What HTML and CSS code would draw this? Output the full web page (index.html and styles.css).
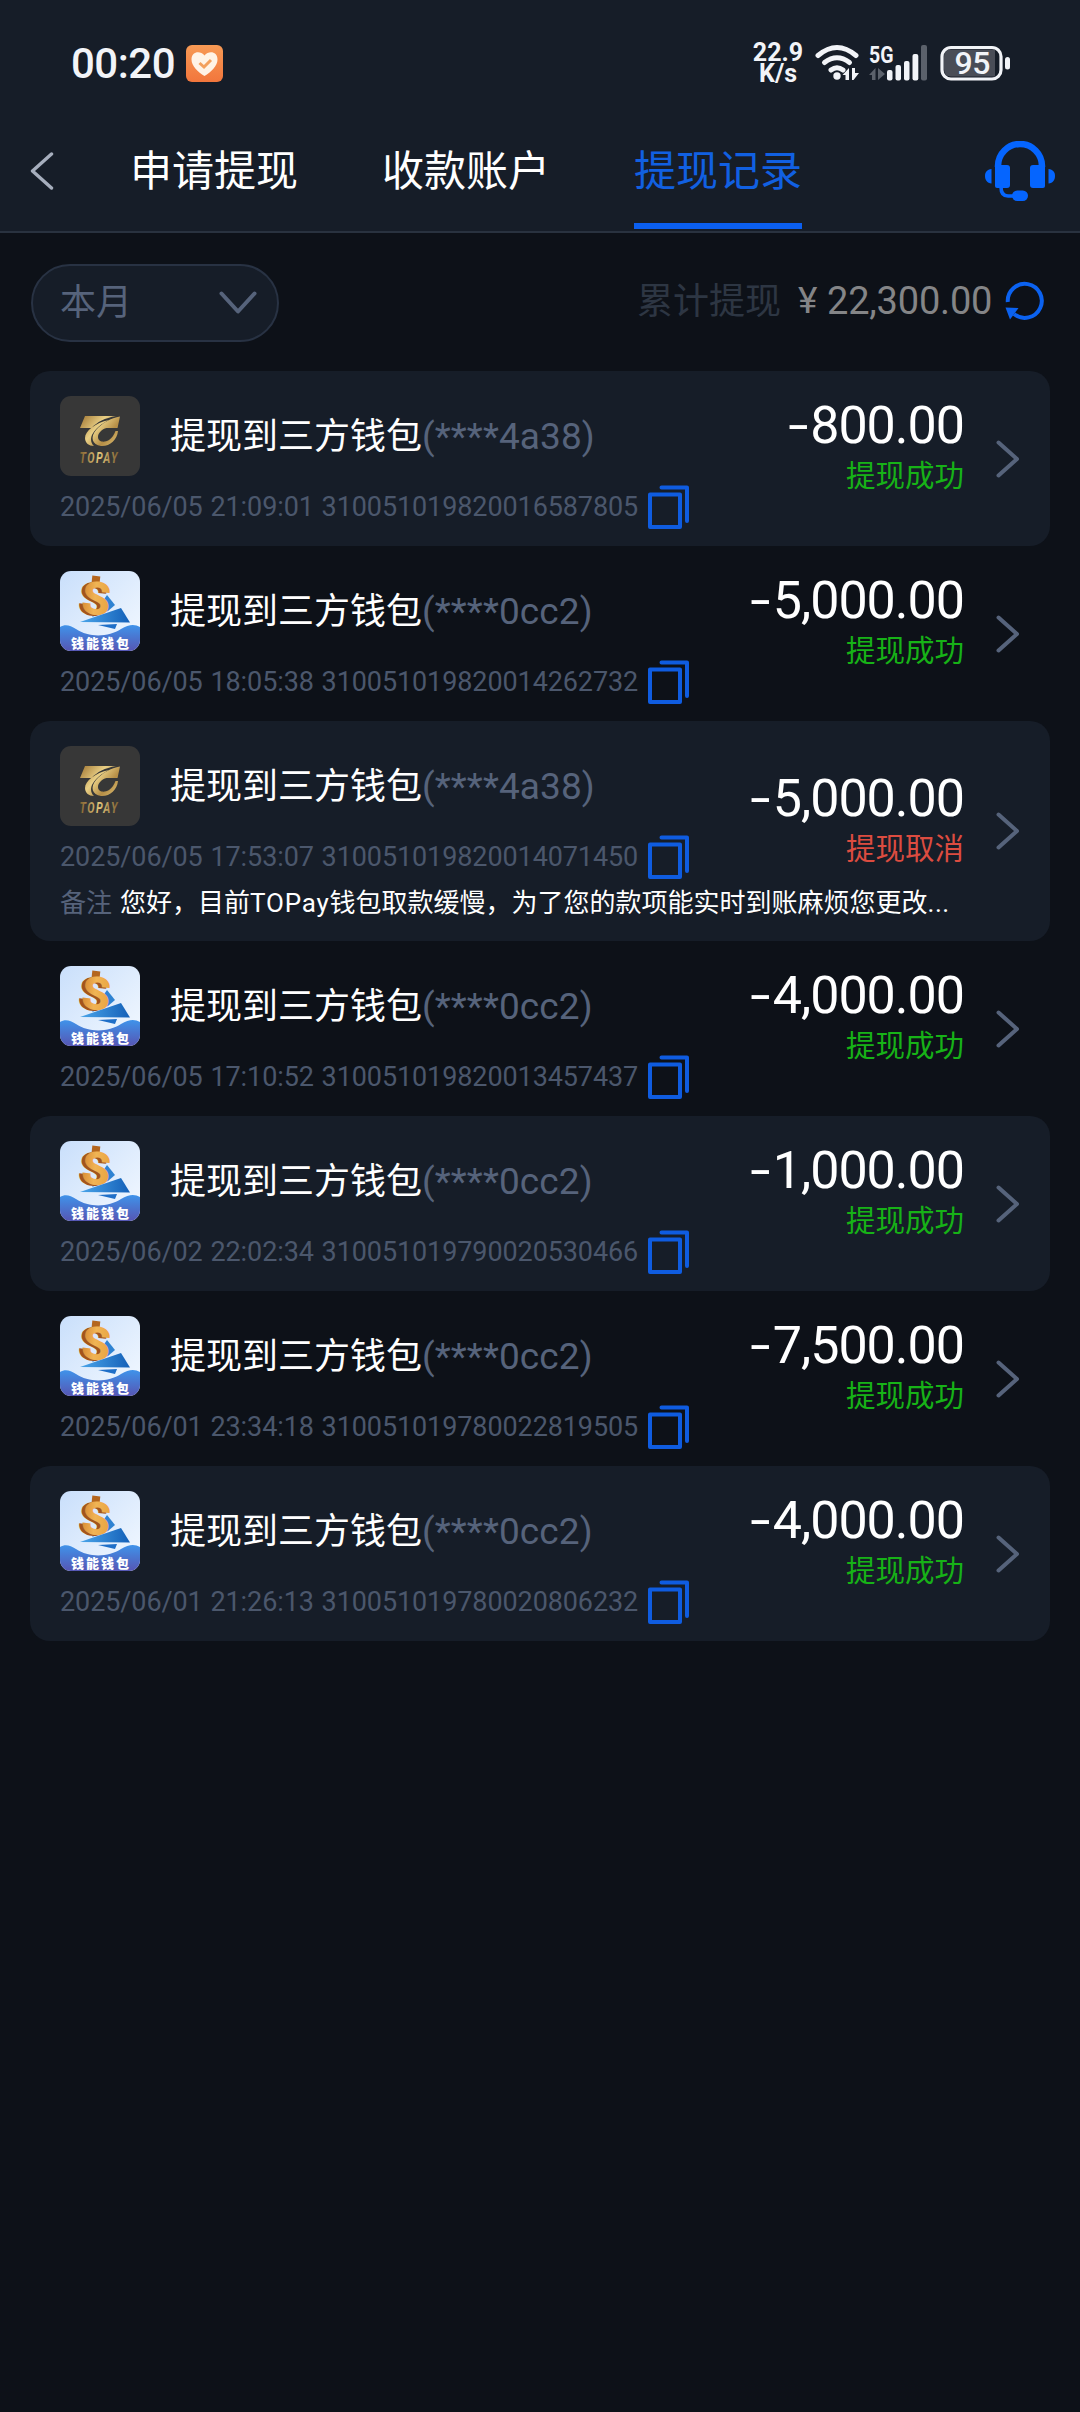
FILE: index.html
```html
<!DOCTYPE html>
<html lang="zh-CN">
<head>
<meta charset="utf-8">
<title>提现记录</title>
<link rel="stylesheet" href="styles.css">
</head>
<body>
<svg class="defs" aria-hidden="true">
  <defs>
    <linearGradient id="gold" gradientUnits="userSpaceOnUse" x1="22" y1="20" x2="58" y2="50">
      <stop offset="0" stop-color="#a57c38"/><stop offset=".4" stop-color="#e9cf85"/><stop offset=".7" stop-color="#b58d45"/><stop offset="1" stop-color="#e0c277"/>
    </linearGradient>
    <linearGradient id="goldText" x1="0" y1="0" x2="1" y2="0">
      <stop offset="0" stop-color="#80602f"/><stop offset=".5" stop-color="#e3c77c"/><stop offset="1" stop-color="#80602f"/>
    </linearGradient>
    <linearGradient id="coin" x1="0" y1="0" x2="1" y2="0">
      <stop offset="0" stop-color="#d98a32"/><stop offset=".45" stop-color="#f0b455"/><stop offset="1" stop-color="#e9a440"/>
    </linearGradient>
    <linearGradient id="sky" x1="0" y1="0" x2="1" y2="1">
      <stop offset="0" stop-color="#c9dffb"/><stop offset="1" stop-color="#f4f9ff"/>
    </linearGradient>
    <linearGradient id="wave" x1="0" y1="0" x2="0" y2="1">
      <stop offset="0" stop-color="#3f93ea"/><stop offset="1" stop-color="#5656b4"/>
    </linearGradient>
    <linearGradient id="sail" x1="0" y1="0" x2="1" y2="0">
      <stop offset="0" stop-color="#4aa5ea"/><stop offset="1" stop-color="#1460b8"/>
    </linearGradient>
    <linearGradient id="orange" x1="0" y1="0" x2="0" y2="1">
      <stop offset="0" stop-color="#f79a55"/><stop offset="1" stop-color="#f2763c"/>
    </linearGradient>
    <clipPath id="round"><rect width="80" height="80" rx="11"/></clipPath>
    <symbol id="topay" viewBox="0 0 80 80">
      <rect width="80" height="80" rx="11" fill="#373737"/>
      <path d="M25 20H56C45 22 37 26 31.500 32H20Z" fill="url(#gold)"/>
      <path d="M49 24C35 27 25 35 25 42C25 47 29 50 34 50C27 43 33 32 49 24Z" fill="url(#gold)"/>
      <path d="M60 20.500L57.500 32H46.500C42 33 38 37 38 41C38 46 44 47 49 44C52 42 54 39 55.500 35H58C57 44 50 50.500 41 50C32 49 30 41 36 34C42 27 51 22 60 20.500Z" fill="url(#gold)"/>
      <text class="topay-text" transform="translate(19.500 67) scale(.72 1)" fill="url(#goldText)">TOPAY</text>
    </symbol>
    <symbol id="qianneng" viewBox="0 0 80 80">
      <g clip-path="url(#round)">
        <rect width="80" height="80" fill="url(#sky)"/>
        <path d="M0 56C5 53 10 54 16 58C29 67 49 66 61 58C69 53 75 53 80 56V80H0Z" fill="url(#wave)"/>
        <path d="M47 24L55 34L48 40L32 46Z" fill="#2f83d2"/>
        <g transform="rotate(6 35 27)">
          <rect x="30" y="5" width="8" height="8" fill="#b4661f"/>
          <text class="dollar dollar-edge" x="18.500" y="44.500">S</text>
          <text class="dollar" x="22" y="43.500">S</text>
        </g>
        <path d="M61 37L20 51L70 51.500Z" fill="url(#sail)"/>
        <path d="M38 54L57 53L55 58Z" fill="#1f6fc8"/>
        <text class="qn-text" x="11" y="76.500" textLength="58">钱能钱包</text>
      </g>
    </symbol>
    <symbol id="copy" viewBox="0 0 42 44">
      <path d="M13.500 2.500H39V36" fill="none" stroke="#0f5ce0" stroke-width="4" stroke-linecap="round" stroke-linejoin="round"/>
      <rect x="2" y="9.500" width="30" height="32.500" fill="none" stroke="#0f5ce0" stroke-width="4" stroke-linejoin="round"/>
    </symbol>
    <symbol id="next" viewBox="0 0 24 38">
      <path d="M2.500 2.500L21 19L2.500 35.500" fill="none" stroke="#56637b" stroke-width="4" stroke-linecap="round" stroke-linejoin="round"/>
    </symbol>
  </defs>
</svg>

<header class="header">
  <div class="status">
    <span class="time">00:20</span>
    <svg class="app" width="37" height="37" viewBox="0 0 37 37">
      <rect width="37" height="37" rx="6" fill="url(#orange)"/>
      <path d="M18.500 31C12 27 5.500 21 5.500 14.500C5.500 6.500 14 5 18.500 10.500C23 5 31.500 6.500 31.500 14.500C31.500 21 25 27 18.500 31Z" fill="#fff3e6"/>
      <path d="M13.500 18L18 22L25 15" fill="none" stroke="#f3a05d" stroke-width="3"/>
    </svg>
    <span class="speed"><span>22.9</span><span>K/s</span></span>
    <svg class="signals" width="200" height="42" viewBox="812 41 200 42">
      <g fill="none" stroke="#f2f4f8" stroke-width="5" stroke-linecap="round">
        <path d="M818 55.500Q837 39.500 856 55.500"/>
        <path d="M824.500 62.500Q837 53 849.500 62.500"/>
        <path d="M831 70Q837 65.500 843 70"/>
      </g>
      <circle cx="837" cy="76" r="3.700" fill="#f2f4f8"/>
      <path d="M842.500 75L849 68V80H845.500V75ZM852 68H855V73H859L853.500 80H852Z" fill="#f2f4f8"/>
      <text class="net" x="869" y="62.500" textLength="24.500" lengthAdjust="spacingAndGlyphs">5G</text>
      <path d="M869 75L875.500 68V80H872V75ZM878 68L885 74L878 80Z" fill="#5b616b"/>
      <g fill="#f2f4f8">
        <rect x="887" y="70" width="5.500" height="10.500" rx="2"/>
        <rect x="895.500" y="65" width="5.500" height="15.500" rx="2"/>
        <rect x="904" y="61" width="5.500" height="19.500" rx="2"/>
        <rect x="912.500" y="54" width="5.800" height="26.500" rx="2"/>
      </g>
      <rect x="921" y="45" width="6" height="35.500" rx="2" fill="#5b616b"/>
      <path d="M951 49.500H995V76.500H951Q944 76.500 944 69V57Q944 49.500 951 49.500Z" fill="#494d57"/>
      <rect x="942" y="47.500" width="59" height="31.500" rx="9" fill="none" stroke="#f2f4f8" stroke-width="3.200"/>
      <rect x="1005" y="57" width="5" height="12.500" rx="2.500" fill="#f2f4f8"/>
      <text class="level" x="954.500" y="74" textLength="36">95</text>
    </svg>
  </div>
  <nav class="nav">
    <svg class="back" width="24" height="38" viewBox="0 0 24 38"><path d="M21.500 2L2.500 19L21.500 36" fill="none" stroke="#a6aebd" stroke-width="3.400" stroke-linecap="round" stroke-linejoin="round"/></svg>
    <div class="tabs">
      <a class="tab">申请提现</a>
      <a class="tab">收款账户</a>
      <a class="tab active">提现记录</a>
    </div>
    <svg class="service" width="70" height="60" viewBox="0 0 70 60" fill="#0565ff">
      <path d="M13 26V25A22 22 0 0 1 57 25V26" fill="none" stroke="#0565ff" stroke-width="6.500"/>
      <path d="M10 24H22Q25 24 25 27V44Q25 47 22 47H12Q10 47 10 45Z"/>
      <path d="M60 24H48Q45 24 45 27V44Q45 47 48 47H58Q60 47 60 45Z"/>
      <path d="M6.500 28V42.500C2 42 0 39 0 35S2 28.500 6.500 28Z"/>
      <path d="M63.500 28V42.500C68 42 70 39 70 35S68 28.500 63.500 28Z"/>
      <path d="M16 46C16 52 18 55 23 55H30" fill="none" stroke="#0565ff" stroke-width="3.600"/>
      <rect x="27" y="49.500" width="16" height="10.500" rx="5.200"/>
    </svg>
  </nav>
</header>

<main>
  <section class="summary">
    <button class="filter">
      <span>本月</span>
      <svg width="38" height="24" viewBox="0 0 38 24"><path d="M2.500 2.500L19 20.500L35.500 2.500" fill="none" stroke="#56637b" stroke-width="4" stroke-linecap="round" stroke-linejoin="round"/></svg>
    </button>
    <div class="total">
      <span class="total-label">累计提现</span>
      <span class="yen">¥</span>
      <span class="total-value">22,300.00</span>
      <svg width="40" height="40" viewBox="0 0 40 40"><path d="M2.800 21A17 17 0 1 1 9 33" fill="none" stroke="#0b62f0" stroke-width="4"/><path d="M.5 26.500L13.500 27L5 38.500Z" fill="#0b62f0"/></svg>
    </div>
  </section>

  <ul class="list">
    <li class="card">
      <svg class="logo"><use href="#topay"/></svg>
      <div class="title">提现到三方钱包<span class="acct">(****4a38)</span></div>
      <div class="meta"><span class="order">2025/06/05 21:09:01 310051019820016587805</span><svg class="copy"><use href="#copy"/></svg></div>
      <div class="result"><span class="amount"><i>-</i>800.00</span><span class="state">提现成功</span></div>
      <svg class="next"><use href="#next"/></svg>
    </li>
    <li class="card">
      <svg class="logo"><use href="#qianneng"/></svg>
      <div class="title">提现到三方钱包<span class="acct">(****0cc2)</span></div>
      <div class="meta"><span class="order">2025/06/05 18:05:38 310051019820014262732</span><svg class="copy"><use href="#copy"/></svg></div>
      <div class="result"><span class="amount"><i>-</i>5,000.00</span><span class="state">提现成功</span></div>
      <svg class="next"><use href="#next"/></svg>
    </li>
    <li class="card noted">
      <svg class="logo"><use href="#topay"/></svg>
      <div class="title">提现到三方钱包<span class="acct">(****4a38)</span></div>
      <div class="meta"><span class="order">2025/06/05 17:53:07 310051019820014071450</span><svg class="copy"><use href="#copy"/></svg></div>
      <div class="note"><span class="note-label">备注</span><span class="note-text">您好，目前<span class="latin">TOPay</span>钱包取款缓慢，为了您的款项能实时到账麻烦您更改<span class="dots">...</span></span></div>
      <div class="result"><span class="amount"><i>-</i>5,000.00</span><span class="state cancelled">提现取消</span></div>
      <svg class="next"><use href="#next"/></svg>
    </li>
    <li class="card">
      <svg class="logo"><use href="#qianneng"/></svg>
      <div class="title">提现到三方钱包<span class="acct">(****0cc2)</span></div>
      <div class="meta"><span class="order">2025/06/05 17:10:52 310051019820013457437</span><svg class="copy"><use href="#copy"/></svg></div>
      <div class="result"><span class="amount"><i>-</i>4,000.00</span><span class="state">提现成功</span></div>
      <svg class="next"><use href="#next"/></svg>
    </li>
    <li class="card">
      <svg class="logo"><use href="#qianneng"/></svg>
      <div class="title">提现到三方钱包<span class="acct">(****0cc2)</span></div>
      <div class="meta"><span class="order">2025/06/02 22:02:34 310051019790020530466</span><svg class="copy"><use href="#copy"/></svg></div>
      <div class="result"><span class="amount"><i>-</i>1,000.00</span><span class="state">提现成功</span></div>
      <svg class="next"><use href="#next"/></svg>
    </li>
    <li class="card">
      <svg class="logo"><use href="#qianneng"/></svg>
      <div class="title">提现到三方钱包<span class="acct">(****0cc2)</span></div>
      <div class="meta"><span class="order">2025/06/01 23:34:18 310051019780022819505</span><svg class="copy"><use href="#copy"/></svg></div>
      <div class="result"><span class="amount"><i>-</i>7,500.00</span><span class="state">提现成功</span></div>
      <svg class="next"><use href="#next"/></svg>
    </li>
    <li class="card">
      <svg class="logo"><use href="#qianneng"/></svg>
      <div class="title">提现到三方钱包<span class="acct">(****0cc2)</span></div>
      <div class="meta"><span class="order">2025/06/01 21:26:13 310051019780020806232</span><svg class="copy"><use href="#copy"/></svg></div>
      <div class="result"><span class="amount"><i>-</i>4,000.00</span><span class="state">提现成功</span></div>
      <svg class="next"><use href="#next"/></svg>
    </li>
  </ul>
</main>
</body>
</html>
```
FILE: styles.css
```css
* { box-sizing: border-box; }
body {
  margin: 0;
  width: 1080px;
  min-height: 2412px;
  background: #0d1118;
  color: #fff;
  font-family: Roboto, "Noto Sans CJK SC", sans-serif;
}
svg { display: block; flex: none; }
.defs { position: absolute; width: 0; height: 0; }

.header {
  height: 233px;
  background: #161d28;
  border-bottom: 2px solid #29323f;
}
.status {
  height: 109px;
  display: flex;
  align-items: flex-start;
  padding: 41px 68px 0 71px;
  color: #f2f4f8;
}
.time {
  width: 115px;
  font-size: 42px;
  line-height: 46px;
  font-weight: 500;
  letter-spacing: -0.5px;
  white-space: nowrap;
}
.app { margin-top: 4px; }
.speed {
  display: flex;
  flex-direction: column;
  align-items: center;
  width: 60px;
  margin: 1px 4px 0 525px;
  font-size: 25px;
  line-height: 21px;
  font-weight: 700;
}
.net { font-size: 23px; font-weight: 700; fill: #f2f4f8; }
.level { font-size: 32px; font-weight: 500; fill: #f2f4f8; }

.nav {
  height: 122px;
  display: flex;
  align-items: center;
  padding: 0 25px 0 30px;
}
.tabs { display: flex; gap: 84px; height: 122px; margin: 0 auto 0 76px; }
.tab {
  display: flex;
  align-items: flex-start;
  height: 120px;
  padding-top: 32px;
  font-size: 42px;
  line-height: 62px;
  border-bottom: 6px solid transparent;
}
.tab.active { color: #1160e2; border-color: #0b5ff0; }
.back, .service { margin-top: 2px; }

.summary {
  height: 138px;
  display: flex;
  align-items: center;
  justify-content: space-between;
  padding: 1px 35px 0 31px;
}
.filter {
  width: 248px;
  height: 78px;
  display: flex;
  align-items: center;
  justify-content: space-between;
  padding: 0 20px 0 27px;
  border: 2px solid #283243;
  border-radius: 39px;
  background: #161d28;
  color: #56637b;
  font: 36px/50px Roboto, "Noto Sans CJK SC", sans-serif;
}
.total {
  display: flex;
  align-items: center;
  height: 50px;
  margin-top: -4px;
  font-size: 38px;
  line-height: 50px;
  color: #848587;
}
.total-label { margin: 3px 17px 0 0; font-size: 36px; color: #2d3643; }
.yen { width: 29px; font-size: 37px; }
.total-value { width: 178px; letter-spacing: -0.2px; }

.list { margin: 0; padding: 0 30px; list-style: none; }
.card {
  display: grid;
  grid-template-columns: 110px 1fr auto 22px;
  grid-template-rows: 80px 62px;
  column-gap: 0;
  height: 175px;
  padding: 25px 32px 8px 30px;
  border-radius: 20px;
}
.card:nth-child(odd) { background: #161d28; }
.card.noted { height: 220px; grid-template-rows: 80px 62px 45px; }
.logo { width: 80px; height: 80px; }
.title {
  grid-column: 2;
  padding-top: 1px;
  font-size: 36px;
  line-height: 80px;
  white-space: nowrap;
}
.acct { color: #56637b; font-size: 37px; letter-spacing: 0.1px; }
.meta {
  grid-column: 1 / 3;
  grid-row: 2;
  display: flex;
  align-items: center;
  color: #4b576c;
}
.order { width: 588px; font-size: 27px; letter-spacing: -0.1px; word-spacing: 1.2px; white-space: nowrap; }
.copy { width: 42px; height: 44px; }
.note {
  grid-column: 1 / 4;
  grid-row: 3;
  display: flex;
  gap: 8px;
  font-size: 26px;
  line-height: 30px;
  white-space: nowrap;
}
.note-label { color: #56637b; }
.latin { letter-spacing: 0.8px; }
.dots { letter-spacing: 0.5px; }
.result {
  grid-column: 3;
  grid-row: 1 / -1;
  align-self: center;
  display: flex;
  flex-direction: column;
  align-items: flex-end;
  margin: -38px 32px 0 0;
}
.amount { font-size: 52px; line-height: 56px; letter-spacing: -1px; }
.amount i { display: inline-block; font-style: normal; transform: scaleX(1.4); margin-right: 6px; }
.state { font-size: 29.5px; line-height: 44px; color: #17b217; }
.state.cancelled { color: #dc4c40; }
.next { grid-column: 4; grid-row: 1 / -1; align-self: center; width: 24px; height: 38px; margin-top: -17px; }
.topay-text { font: italic 700 15px Roboto, sans-serif; letter-spacing: 2px; }
.dollar { font: 900 46px Roboto, sans-serif; fill: url(#coin); }
.dollar-edge { fill: #a4541c; }
.qn-text { font: 900 13px "Noto Sans CJK SC", sans-serif; fill: #fff; }
```
